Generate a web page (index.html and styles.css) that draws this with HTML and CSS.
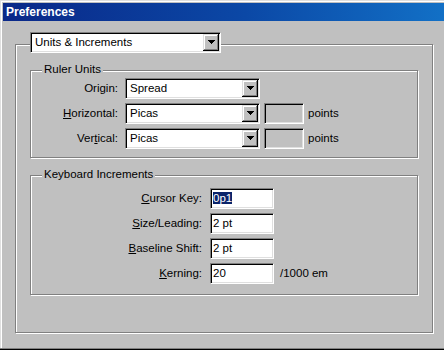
FILE: index.html
```html
<!DOCTYPE html>
<html lang="en">
  <head>
    <meta charset="UTF-8" />
    <title>Preferences</title>
    <link rel="stylesheet" href="styles.css">
  </head>
  <body>
    <div class="window">
      <div class="titlebar">Preferences</div>

      <div class="panel">
        <div class="select panel-select">
          <span class="select-text">Units &amp; Increments</span>
          <span class="select-btn"><svg width="7" height="4"><path d="M0 0H7V1H6V2H5V3H4V4H3V3H2V2H1V1H0Z"/></svg></span>
        </div>

        <div class="group ruler">
          <div class="group-title">Ruler Units</div>
          <div class="row">
            <label class="label">Origin:</label>
            <div class="select unit-select">
              <span class="select-text">Spread</span>
              <span class="select-btn"><svg width="7" height="4"><path d="M0 0H7V1H6V2H5V3H4V4H3V3H2V2H1V1H0Z"/></svg></span>
            </div>
          </div>
          <div class="row">
            <label class="label"><u>H</u>orizontal:</label>
            <div class="select unit-select">
              <span class="select-text">Picas</span>
              <span class="select-btn"><svg width="7" height="4"><path d="M0 0H7V1H6V2H5V3H4V4H3V3H2V2H1V1H0Z"/></svg></span>
            </div>
            <div class="field small disabled"></div>
            <span class="unit">points</span>
          </div>
          <div class="row">
            <label class="label">Ver<u>t</u>ical:</label>
            <div class="select unit-select">
              <span class="select-text">Picas</span>
              <span class="select-btn"><svg width="7" height="4"><path d="M0 0H7V1H6V2H5V3H4V4H3V3H2V2H1V1H0Z"/></svg></span>
            </div>
            <div class="field small disabled"></div>
            <span class="unit">points</span>
          </div>
        </div>

        <div class="group keyboard">
          <div class="group-title">Keyboard Increments</div>
          <div class="row">
            <label class="label wide"><u>C</u>ursor Key:</label>
            <div class="field"><span class="sel">0p1</span></div>
          </div>
          <div class="row">
            <label class="label wide"><u>S</u>ize/Leading:</label>
            <div class="field">2 pt</div>
          </div>
          <div class="row">
            <label class="label wide"><u>B</u>aseline Shift:</label>
            <div class="field">2 pt</div>
          </div>
          <div class="row">
            <label class="label wide"><u>K</u>erning:</label>
            <div class="field">20</div>
            <span class="unit em">/1000 em</span>
          </div>
        </div>
      </div>
    </div>
  </body>
</html>
```

FILE: styles.css
```css
body {
    margin: 0;
    background: #c0c0c0;
    font-family: "Liberation Sans", Arial, sans-serif;
    font-size: 11.5px;
    color: #000;
}

.window {
    width: 444px;
    height: 350px;
    box-sizing: border-box;
    padding: 3px 0 0 3px;
    background: #c0c0c0;
    box-shadow: inset 0 -1px 0 #000, inset 0 -2px 0 #808080,
                inset 1px 1px 0 #dfdfdf, inset 2px 2px 0 #fff;
    overflow: hidden;
}

.titlebar {
    height: 18px;
    line-height: 18px;
    padding-left: 3px;
    color: #fff;
    font-weight: bold;
    font-size: 12px;
    background: linear-gradient(to right, #0a2888, #0b48a6 55%, #1270c6);
}

/* tab panel with the page dropdown sitting on its top edge */
.panel {
    position: relative;
    width: 418px;
    height: 289px;
    box-sizing: border-box;
    margin: 23px 0 0 12px;
    padding: 25px 14px 0;
    border: 1px solid #808080;
    box-shadow: inset 1px 1px 0 #fff, 1px 1px 0 #fff;
}

.panel-select {
    position: absolute;
    top: -13px;
    left: 14px;
    width: 191px;
}

.group {
    position: relative;
    box-sizing: border-box;
    border: 1px solid #808080;
    box-shadow: inset 1px 1px 0 #fff, 1px 1px 0 #fff;
    display: flex;
    flex-direction: column;
    gap: 4px;
}

.group.ruler {
    height: 88px;
    padding: 7px 0 8px;
}

.group.keyboard {
    height: 120px;
    margin-top: 17px;
    padding: 12px 0 10px;
}

.group-title {
    position: absolute;
    top: -8px;
    left: 11px;
    padding: 0 2px;
    line-height: 13px;
    background: #c0c0c0;
}

.row {
    display: flex;
    align-items: center;
    gap: 4px;
    height: 21px;
    line-height: 21px;
}

.label {
    width: 90px;
    box-sizing: border-box;
    padding-right: 3px;
    text-align: right;
}

.label.wide {
    width: 175px;
    padding-right: 4px;
}

.select {
    display: flex;
    box-sizing: border-box;
    height: 21px;
    padding: 1px;
    background: #fff;
    border: 1px solid;
    border-color: #808080 #fff #fff #808080;
    box-shadow: inset 1px 1px 0 #000, inset -1px -1px 0 #dfdfdf;
}

.unit-select {
    width: 135px;
}

.select-text {
    flex: 1;
    padding-left: 3px;
    line-height: 17px;
    white-space: nowrap;
}

.select-btn {
    width: 16px;
    height: 17px;
    display: flex;
    align-items: center;
    justify-content: center;
    background: #c0c0c0;
    box-shadow: inset -1px -1px 0 #000, inset 1px 1px 0 #dfdfdf,
                inset -2px -2px 0 #808080, inset 2px 2px 0 #fff;
}

.select-btn svg {
    display: block;
    margin: 0 0 1px 0;
}

.field {
    width: 64px;
    height: 21px;
    box-sizing: border-box;
    padding: 1px 2px;
    line-height: 17px;
    background: #fff;
    border: 1px solid;
    border-color: #808080 #fff #fff #808080;
    box-shadow: inset 1px 1px 0 #000, inset -1px -1px 0 #dfdfdf;
    white-space: nowrap;
}

.field.small {
    width: 40px;
}

.field.disabled {
    background: #c0c0c0;
}

.sel {
    background: #0a246a;
    color: #fff;
}

.unit.em {
    margin-left: 2px;
}
```
